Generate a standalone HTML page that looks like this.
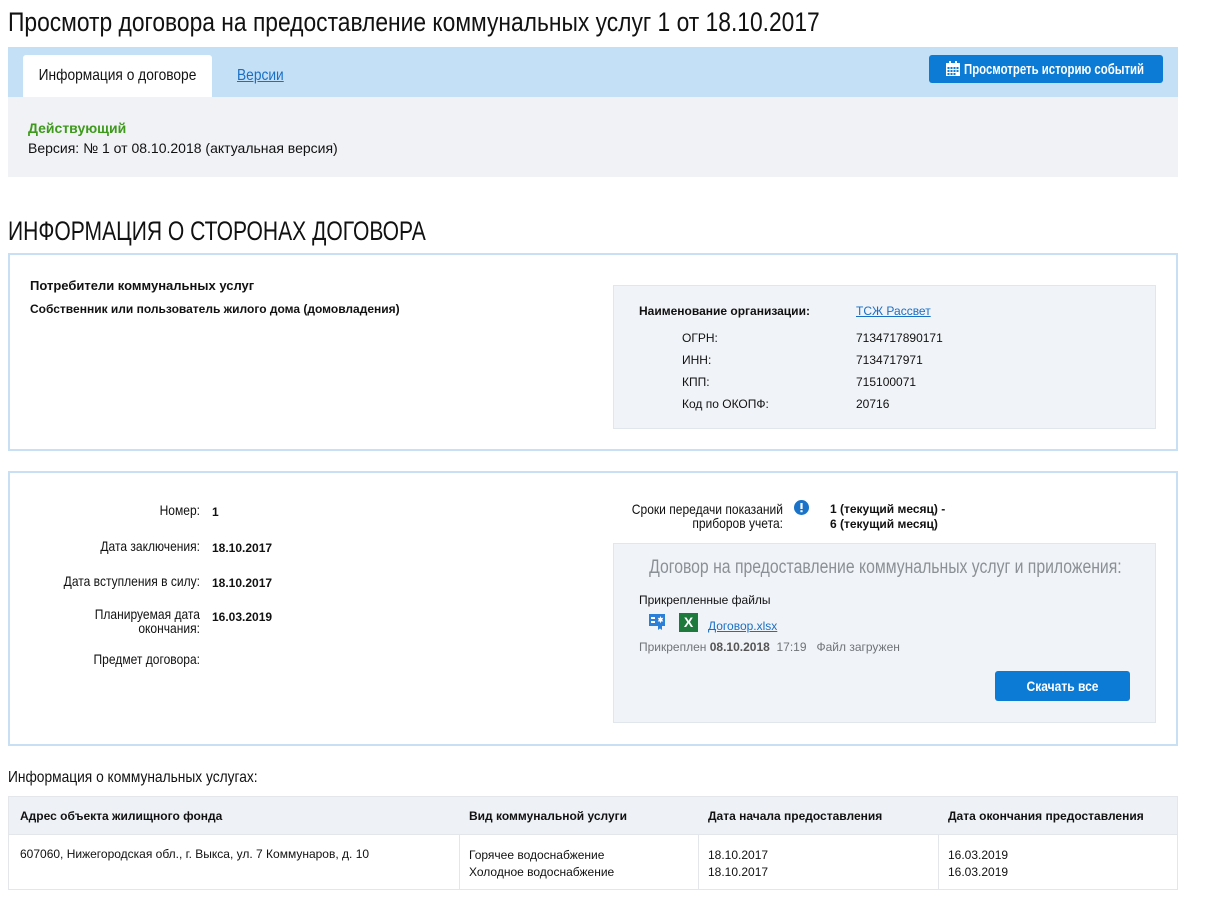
<!DOCTYPE html>
<html><head><meta charset="utf-8">
<style>
*{margin:0;padding:0;box-sizing:border-box}
body{width:1205px;height:901px;background:#fff;font-family:"Liberation Sans",Arial,sans-serif;color:#111;position:relative;overflow:hidden}
.a{position:absolute;white-space:nowrap}
.c{transform:scaleX(.86);transform-origin:0 0}
.cr{transform:scaleX(.86);transform-origin:100% 0;text-align:right}
.cc{transform:scaleX(.86);transform-origin:50% 0;text-align:center}
.box{position:absolute;border:2px solid #c8e0f4;background:#fff}
.gray{position:absolute;background:#f0f3f7;border:1px solid #e1e6ec}
a{color:#1a6fc4;text-decoration:underline}
.s12{font-size:12px}
.b{font-weight:bold}
.lab{font-size:14px;width:260px}
</style></head><body>

<div class="a" style="left:8px;top:7px;font-size:27px;color:#111;transform:scaleX(.845);transform-origin:0 0">Просмотр договора на предоставление коммунальных услуг 1 от 18.10.2017</div>

<div class="a" style="left:8px;top:47px;width:1170px;height:50px;background:#c4e0f6"></div>
<div class="a" style="left:23px;top:55px;width:189px;height:42px;background:#fff;border-radius:3px 3px 0 0"></div>
<div class="a cc" style="left:23px;top:67px;width:189px;font-size:16px">Информация о договоре</div>
<div class="a c" style="left:237px;top:67px;font-size:16px;color:#1a6fc4;text-decoration:underline">Версии</div>

<div class="a" style="left:929px;top:55px;width:234px;height:28px;background:#0b7bd6;border-radius:3px"></div>
<svg class="a" style="left:946px;top:61px" width="14" height="15" viewBox="0 0 14 15"><rect x="0" y="2" width="14" height="13" fill="#fff"/><rect x="3" y="0" width="2" height="4" fill="#fff"/><rect x="9" y="0" width="2" height="4" fill="#fff"/><g fill="#0b7bd6"><rect x="1.5" y="6" width="2" height="2"/><rect x="4.5" y="6" width="2" height="2"/><rect x="7.5" y="6" width="2" height="2"/><rect x="10.5" y="6" width="2" height="2"/><rect x="1.5" y="9" width="2" height="2"/><rect x="4.5" y="9" width="2" height="2"/><rect x="7.5" y="9" width="2" height="2"/><rect x="10.5" y="9" width="2" height="2"/><rect x="1.5" y="12" width="2" height="2"/><rect x="4.5" y="12" width="2" height="2"/><rect x="7.5" y="12" width="2" height="2"/></g></svg>
<div class="a" style="left:964px;top:61px;font-size:15px;color:#fff;font-weight:bold;transform:scaleX(.76);transform-origin:0 0">Просмотреть историю событий</div>

<div class="a" style="left:8px;top:97px;width:1170px;height:80px;background:#f1f2f6"></div>
<div class="a" style="left:28px;top:120px;font-size:14px;font-weight:bold;color:#3d9a1b">Действующий</div>
<div class="a" style="left:28px;top:140px;font-size:14px">Версия: № 1 от 08.10.2018 (актуальная версия)</div>

<div class="a" style="left:8px;top:216px;font-size:27px;transform:scaleX(.78);transform-origin:0 0">ИНФОРМАЦИЯ О СТОРОНАХ ДОГОВОРА</div>

<div class="box" style="left:8px;top:253px;width:1170px;height:198px"></div>
<div class="a b" style="left:30px;top:278px;font-size:13px">Потребители коммунальных услуг</div>
<div class="a" style="left:30px;top:302px;font-size:12px;font-weight:bold">Собственник или пользователь жилого дома (домовладения)</div>
<div class="gray" style="left:613px;top:285px;width:543px;height:144px"></div>
<div class="a s12 b" style="left:639px;top:304px">Наименование организации:</div>
<div class="a s12" style="left:856px;top:304px"><a>ТСЖ Рассвет</a></div>
<div class="a s12" style="left:682px;top:331px">ОГРН:</div><div class="a s12" style="left:856px;top:331px">7134717890171</div>
<div class="a s12" style="left:682px;top:353px">ИНН:</div><div class="a s12" style="left:856px;top:353px">7134717971</div>
<div class="a s12" style="left:682px;top:375px">КПП:</div><div class="a s12" style="left:856px;top:375px">715100071</div>
<div class="a s12" style="left:682px;top:397px">Код по ОКОПФ:</div><div class="a s12" style="left:856px;top:397px">20716</div>

<div class="box" style="left:8px;top:471px;width:1170px;height:275px"></div>
<div class="a lab cr" style="left:-60px;top:502px">Номер:</div><div class="a s12 b" style="left:212px;top:505px">1</div>
<div class="a lab cr" style="left:-60px;top:538px">Дата заключения:</div><div class="a s12 b" style="left:212px;top:541px">18.10.2017</div>
<div class="a lab cr" style="left:-60px;top:573px">Дата вступления в силу:</div><div class="a s12 b" style="left:212px;top:576px">18.10.2017</div>
<div class="a lab cr" style="left:-60px;top:607px;line-height:14px">Планируемая дата<br>окончания:</div><div class="a s12 b" style="left:212px;top:610px">16.03.2019</div>
<div class="a lab cr" style="left:-60px;top:651px">Предмет договора:</div>

<div class="a lab cr" style="left:523px;top:502px;line-height:14px">Сроки передачи показаний<br>приборов учета:</div>
<svg class="a" style="left:794px;top:500px" width="15" height="15" viewBox="0 0 15 15"><circle cx="7.5" cy="7.5" r="7.5" fill="#1a73c8"/><rect x="6.4" y="3" width="2.2" height="6" fill="#fff"/><rect x="6.4" y="10.2" width="2.2" height="2" fill="#fff"/></svg>
<div class="a s12 b" style="left:830px;top:502px;line-height:15px">1 (текущий месяц) -<br>6 (текущий месяц)</div>

<div class="gray" style="left:613px;top:543px;width:543px;height:180px"></div>
<div class="a" style="left:603px;top:557px;width:543px;font-size:19px;color:#8b9096;text-align:center;transform:scaleX(.83);transform-origin:50% 0">Договор на предоставление коммунальных услуг и приложения:</div>
<div class="a s12" style="left:639px;top:593px">Прикрепленные файлы</div>
<svg class="a" style="left:648px;top:613px" width="18" height="18" viewBox="0 0 18 18"><rect x="1" y="1" width="16" height="12" fill="#2a7fd8"/><rect x="3" y="4" width="4" height="2" fill="#fff"/><rect x="3" y="8" width="4" height="2" fill="#fff"/><path d="M12.5 3 L13.3 5 L15.3 4.8 L14.2 6.7 L15.3 8.5 L13.3 8.4 L12.5 10.3 L11.7 8.4 L9.7 8.5 L10.8 6.7 L9.7 4.8 L11.7 5Z" fill="#fff"/><path d="M10 13 L10 17 L12 15.5 L14 17 L14 13Z" fill="#2a7fd8"/></svg>
<div class="a" style="left:679px;top:613px;width:19px;height:19px;background:#1d7a3c;color:#fff;font-weight:bold;font-size:14px;text-align:center;line-height:19px">X</div>
<div class="a s12" style="left:708px;top:619px"><a>Договор.xlsx</a></div>
<div class="a s12" style="left:639px;top:640px;color:#707478">Прикреплен <b style="color:#555">08.10.2018</b>&nbsp; 17:19 &nbsp;&nbsp;Файл загружен</div>
<div class="a" style="left:995px;top:671px;width:135px;height:30px;background:#0b7bd6;border-radius:3px"></div>
<div class="a cc" style="left:995px;top:678px;width:135px;font-size:14px;font-weight:bold;color:#fff">Скачать все</div>

<div class="a c" style="left:8px;top:769px;font-size:16px">Информация о коммунальных услугах:</div>
<div class="a" style="left:8px;top:796px;width:1170px;height:94px;border:1px solid #e3e7ec"></div>
<div class="a" style="left:9px;top:797px;width:1168px;height:38px;background:#eef2f6;border-bottom:1px solid #e3e7ec"></div>
<div class="a" style="left:459px;top:835px;width:1px;height:54px;background:#e3e7ec"></div>
<div class="a" style="left:698px;top:835px;width:1px;height:54px;background:#e3e7ec"></div>
<div class="a" style="left:938px;top:835px;width:1px;height:54px;background:#e3e7ec"></div>
<div class="a s12 b" style="left:20px;top:809px">Адрес объекта жилищного фонда</div>
<div class="a s12 b" style="left:469px;top:809px">Вид коммунальной услуги</div>
<div class="a s12 b" style="left:708px;top:809px">Дата начала предоставления</div>
<div class="a s12 b" style="left:948px;top:809px">Дата окончания предоставления</div>
<div class="a s12" style="left:20px;top:847px">607060, Нижегородская обл., г. Выкса, ул. 7 Коммунаров, д. 10</div>
<div class="a s12" style="left:469px;top:847px;line-height:17px">Горячее водоснабжение<br>Холодное водоснабжение</div>
<div class="a s12" style="left:708px;top:847px;line-height:17px">18.10.2017<br>18.10.2017</div>
<div class="a s12" style="left:948px;top:847px;line-height:17px">16.03.2019<br>16.03.2019</div>
</body></html>
